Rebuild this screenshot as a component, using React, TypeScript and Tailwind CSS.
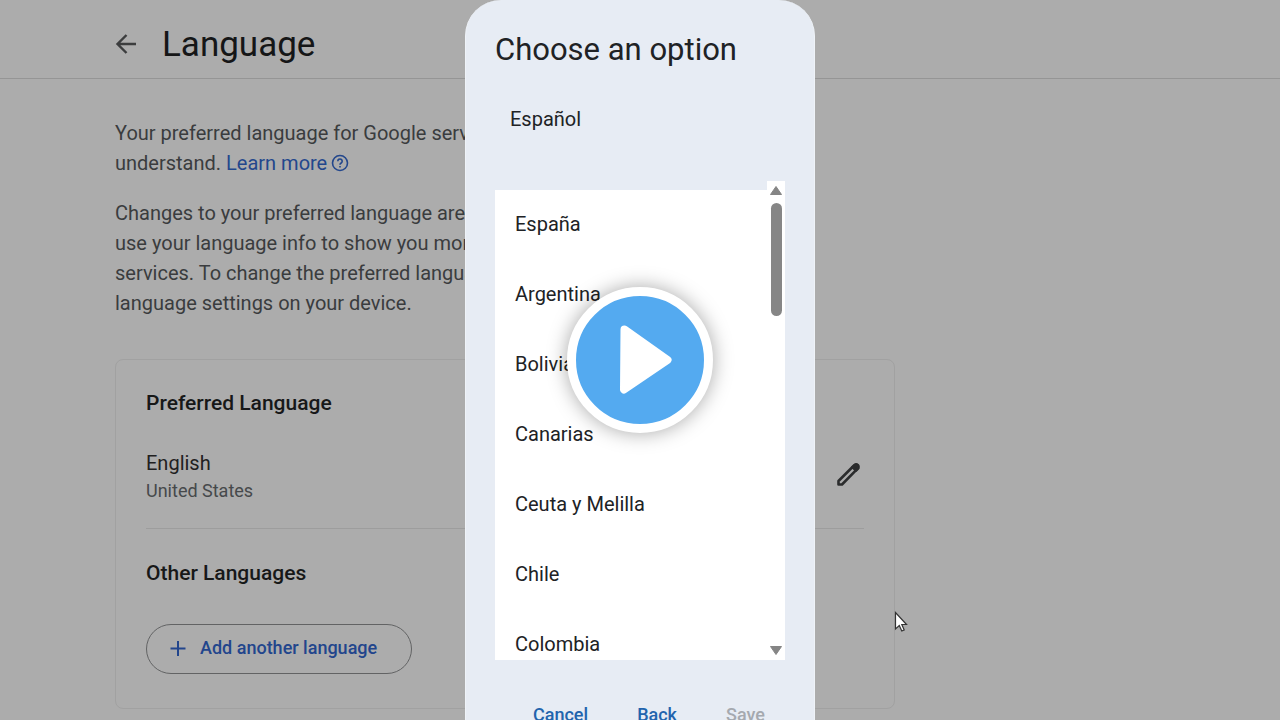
import { useState } from 'react';

const countries = ['España', 'Argentina', 'Bolivia', 'Canarias', 'Ceuta y Melilla', 'Chile', 'Colombia'];

function Header() {
  return (
    <header className="flex h-[79px] items-center gap-6 border-b border-[#959595] pl-[114px] pt-3">
      <button aria-label="Go back">
        <svg width="24" height="24" viewBox="0 0 24 24" fill="none" stroke="#3c3d3e" strokeWidth="2.4">
          <path d="M22 11H4M12.500 2L3.500 11l9 9" />
        </svg>
      </button>
      <h1 className="text-[35px] leading-[44px] text-[#151617]">Language</h1>
    </header>
  );
}

function LanguageCard() {
  return (
    <section className="mt-[41px] flex flex-col rounded-lg border border-[#a1a1a1] px-[30px] pb-[34px] pt-7">
      <h2 className="text-[21px] leading-[30px] font-medium text-[#171818]">Preferred Language</h2>
      <div className="mt-[30px] flex items-center justify-between border-b border-[#9d9d9d] pb-6">
        <div>
          <p className="text-xl leading-[30px] text-[#1f2021]">English</p>
          <p className="text-lg leading-[26px] text-[#46494b]">United States</p>
        </div>
        <button aria-label="Edit language">
          <svg width="30" height="30" viewBox="0 0 30 30" fill="none" stroke="#2b2c2d" strokeWidth="2.6" strokeLinejoin="round">
            <path d="M4.500 23.500v-3.500L20.500 4a2.200 2.200 0 0 1 3.300 0a2.200 2.200 0 0 1 0 3.300L8 23.500z" />
            <path d="M18.500 6l3.500 3.500l2.200-2.200l-2.600-3.300z" fill="#2b2c2d" />
          </svg>
        </button>
      </div>
      <h2 className="mt-[29px] text-[21px] leading-[30px] font-medium text-[#171818]">Other Languages</h2>
      <button className="mt-9 flex h-[50px] items-center gap-[11px] self-start rounded-full border border-[#626364] pb-0.5 pl-5 pr-[34px] text-lg font-medium text-[#22458c]">
        <svg width="22" height="22" viewBox="0 0 22 22" fill="none" stroke="currentColor" strokeWidth="2">
          <path d="M11 4v15M3.500 11.500h15" />
        </svg>
        Add another language
      </button>
    </section>
  );
}

function LanguageDialog() {
  const [selected, setSelected] = useState('');

  return (
    <div
      role="dialog"
      aria-labelledby="dialog-title"
      className="flex w-[350px] shrink-0 flex-col self-start rounded-[36px] border-x border-[#eff3f8] bg-[#e7ecf4] px-[29px] pb-8 pt-7 text-[#202225]"
    >
      <h2 id="dialog-title" className="text-[31px] leading-[44px]">Choose an option</h2>
      <p className="mt-8 pl-[15px] text-xl leading-[30px]">Español</p>

      <div className="mt-[47px] flex">
        <ul role="listbox" aria-label="Region" className="mt-[9px] h-[470px] flex-1 overflow-hidden bg-white">
          {countries.map((country) => (
            <li key={country} role="option" aria-selected={selected === country}>
              <button onClick={() => setSelected(country)} className="h-[70px] w-full px-5 pb-0.5 text-left text-xl">
                {country}
              </button>
            </li>
          ))}
        </ul>
        {/* Scrollbar */}
        <div className="flex w-[18px] flex-col items-center bg-white py-1">
          <svg width="14" height="11" viewBox="0 0 14 11" fill="#858585">
            <path d="M7 1.500L12.500 9.500h-11z" stroke="#858585" strokeLinejoin="round" />
          </svg>
          <div className="mt-[7px] h-[113px] w-[11px] rounded-full bg-[#868686]" />
          <svg className="mt-auto" width="14" height="11" viewBox="0 0 14 11" fill="#858585">
            <path d="M7 9.500L1.500 1.500h11z" stroke="#858585" strokeLinejoin="round" />
          </svg>
        </div>
      </div>

      <div className="mt-10 flex justify-between pl-[38px] pr-5 text-lg leading-[30px] font-medium">
        <button className="text-[#2264ad]">Cancel</button>
        <button className="text-[#2264ad]">Back</button>
        <button disabled className="text-[#a5a9af]">Save</button>
      </div>
    </div>
  );
}

function PlayButton() {
  return (
    <button
      aria-label="Play"
      className="pointer-events-auto flex size-[146px] items-center justify-center rounded-full border-[9px] border-white bg-[#54aaf0] shadow-[0_0_20px_rgba(0,0,0,0.35)]"
    >
      <svg width="128" height="128" viewBox="0 0 128 128" fill="white" stroke="white" strokeWidth="8" strokeLinejoin="round">
        <path d="M48.500 33.500L91.500 64L48 93.500z" />
      </svg>
    </button>
  );
}

export default function App() {
  return (
    <div className="relative h-screen overflow-hidden bg-[#acacac] font-['Google_Sans',Roboto,sans-serif]">
      <Header />
      <main className="ml-[115px] max-w-[780px] pt-[39px] text-xl leading-[30px] text-[#3a3c3e]">
        <p>
          Your preferred language for Google services
          <br />
          understand.{' '}
          <a href="#" className="inline-flex items-center gap-1 text-[#23478c]">
            Learn more
            <svg width="18" height="18" viewBox="0 0 18 18" fill="none" stroke="currentColor" strokeWidth="1.600">
              <circle cx="9" cy="9" r="7.500" />
              <path d="M6.800 7.200a2.200 2.200 0 1 1 3.400 1.800c-.8.5-1.200.9-1.200 1.700M9 12v1.600" />
            </svg>
          </a>
        </p>
        <p className="mt-5">
          Changes to your preferred language are
          <br />
          use your language info to show you more
          <br />
          services. To change the preferred language
          <br />
          language settings on your device.
        </p>
        <LanguageCard />
      </main>

      <div className="absolute inset-0 flex justify-center overflow-hidden">
        <LanguageDialog />
      </div>
      <div className="pointer-events-none absolute inset-0 flex items-center justify-center">
        <PlayButton />
      </div>

      {/* Mouse pointer */}
      <svg className="absolute left-[894px] top-[611px]" width="14" height="22" viewBox="0 0 14 22" fill="white" stroke="#333" strokeWidth="1.200">
        <path d="M1.500 1.500v16.500l3.800-3.500l2.500 5.500l2.400-1.100l-2.400-5.400h4.700z" />
      </svg>
    </div>
  );
}
